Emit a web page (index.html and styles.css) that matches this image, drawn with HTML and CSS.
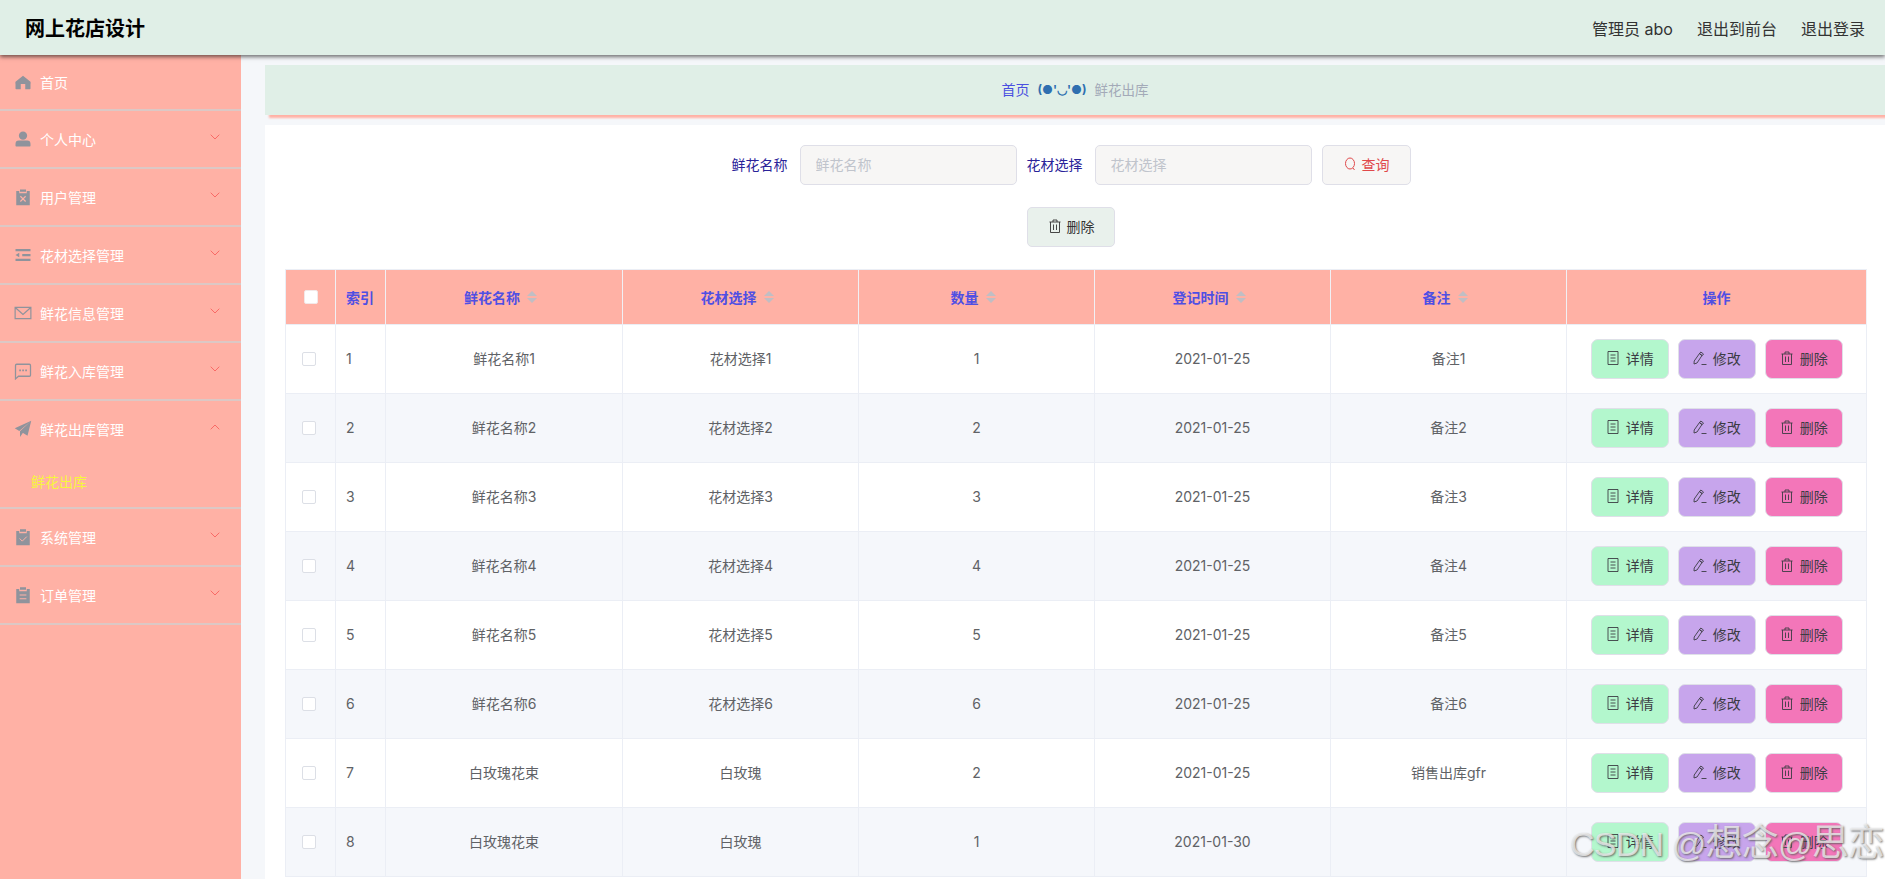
FILE: index.html
```html
<!DOCTYPE html>
<html lang="zh">
<head>
<meta charset="utf-8">
<title>网上花店设计</title>
<link rel="stylesheet" href="styles.css">
</head>
<body>
<svg class="defs" aria-hidden="true">
  <symbol id="i-home" viewBox="0 0 24 24"><path d="M12 3.500 2 11.500c-.3 1-.3 2 0 3v6a1 1 0 0 0 1 1h6v-7h6v7h6a1 1 0 0 0 1-1v-6c.3-1 .3-2 0-3z" fill="currentColor"/></symbol>
  <symbol id="i-user" viewBox="0 0 24 24"><circle cx="12" cy="7.500" r="5.500" fill="currentColor"/><path d="M2 21v-2.500a4.500 4.500 0 0 1 4.500-4.500h11a4.500 4.500 0 0 1 4.500 4.500V21a1 1 0 0 1-1 1H3a1 1 0 0 1-1-1z" fill="currentColor"/></symbol>
  <symbol id="i-release" viewBox="0 0 24 24"><path d="M8 2h8v3H8zM3 4h4v3h10V4h4v19H3z" fill="currentColor"/><path d="m8.500 11 7 7m0-7-7 7" stroke="#ffb1a5" stroke-width="1.500" fill="none"/></symbol>
  <symbol id="i-operation" viewBox="0 0 24 24"><path d="M2 4h20v3H2zM11 10.500h11v3H11zM2 17h20v3H2zM2 12l5-3v6z" fill="currentColor"/></symbol>
  <symbol id="i-message" viewBox="0 0 24 24"><path d="M1.500 4.500h21v15h-21zM2 5l10 9 10-9" fill="none" stroke="currentColor" stroke-width="1.600"/></symbol>
  <symbol id="i-chat" viewBox="0 0 24 24"><path d="M2 4.500a1.500 1.500 0 0 1 1.500-1.500h17a1.500 1.500 0 0 1 1.500 1.500v13a1.500 1.500 0 0 1-1.500 1.500H6l-4 3.500z" fill="none" stroke="currentColor" stroke-width="1.700"/><path d="M7 10h2.200v2.200H7zM11 10h2.200v2.200H11zM15 10h2.200v2.200H15z" fill="currentColor"/></symbol>
  <symbol id="i-send" viewBox="0 0 24 24"><path d="M23 1 1 11l6 3.500zM23 1 9.500 15.500 18 21zM23 1 8 15v7.500l3.500-5z" fill="currentColor"/></symbol>
  <symbol id="i-claim" viewBox="0 0 24 24"><path d="M8 1.500h8v3.500H8zM3 4h4v3h10V4h4v19H3z" fill="currentColor"/><path d="m7.500 14 3.500 3.500 6-6" stroke="#ffb1a5" stroke-width="1.300" fill="none"/></symbol>
  <symbol id="i-order" viewBox="0 0 24 24"><path d="M8 1.500h8v3.500H8zM3 4h4v3h10V4h4v19H3z" fill="currentColor"/><path d="M7.500 12h9M7.500 17h9" stroke="#ffb1a5" stroke-width="1.500" fill="none"/></symbol>
  <symbol id="i-down" viewBox="0 0 10 6"><path d="m.7.7 4.300 4.300L9.300.7" fill="none" stroke="currentColor" stroke-width="1"/></symbol>
  <symbol id="i-up" viewBox="0 0 10 6"><path d="M.7 5.300 5 1l4.300 4.300" fill="none" stroke="currentColor" stroke-width="1"/></symbol>
  <symbol id="i-search" viewBox="0 0 14 14"><ellipse cx="7" cy="6.500" rx="4.500" ry="5.500" fill="none" stroke="currentColor"/><path d="m10 11 1.500 2" fill="none" stroke="currentColor"/></symbol>
  <symbol id="i-trash" viewBox="0 0 14 14"><path d="M1.500 3h11M5 3V1h4v2M2.500 3v10.500h9V3M5.500 5.500v5.500M8.500 5.500v5.500" fill="none" stroke="currentColor" stroke-width=".9"/></symbol>
  <symbol id="i-doc" viewBox="0 0 14 14"><path d="M2 .5h10v13H2zM4.500 4h5M4.500 7h5M4.500 10h5" fill="none" stroke="currentColor" stroke-width=".9"/></symbol>
  <symbol id="i-edit" viewBox="0 0 14 14"><path d="M6.500 2.500l2.500 2-5 7.500-3 1 .2-3zM7.800 1l2.700 2-1.300 1.700-2.700-2zM8.500 13.500h5" fill="none" stroke="currentColor" stroke-width=".9"/></symbol>
</svg>

<header class="topbar">
  <div class="brand">网上花店设计</div>
  <nav class="topnav"><span>管理员 abo</span><span>退出到前台</span><span>退出登录</span></nav>
</header>

<div class="shell">
  <aside class="sidebar">
    <div class="menu-item"><svg class="mi"><use href="#i-home"/></svg><span>首页</span></div>
    <div class="menu-item"><svg class="mi"><use href="#i-user"/></svg><span>个人中心</span><svg class="arrow"><use href="#i-down"/></svg></div>
    <div class="menu-item"><svg class="mi"><use href="#i-release"/></svg><span>用户管理</span><svg class="arrow"><use href="#i-down"/></svg></div>
    <div class="menu-item"><svg class="mi"><use href="#i-operation"/></svg><span>花材选择管理</span><svg class="arrow"><use href="#i-down"/></svg></div>
    <div class="menu-item"><svg class="mi"><use href="#i-message"/></svg><span>鲜花信息管理</span><svg class="arrow"><use href="#i-down"/></svg></div>
    <div class="menu-item"><svg class="mi"><use href="#i-chat"/></svg><span>鲜花入库管理</span><svg class="arrow"><use href="#i-down"/></svg></div>
    <div class="menu-group">
      <div class="menu-title"><svg class="mi"><use href="#i-send"/></svg><span>鲜花出库管理</span><svg class="arrow"><use href="#i-up"/></svg></div>
      <div class="submenu-item">鲜花出库</div>
    </div>
    <div class="menu-item"><svg class="mi"><use href="#i-claim"/></svg><span>系统管理</span><svg class="arrow"><use href="#i-down"/></svg></div>
    <div class="menu-item"><svg class="mi"><use href="#i-order"/></svg><span>订单管理</span><svg class="arrow"><use href="#i-down"/></svg></div>
  </aside>

  <main class="content">
    <div class="crumb"><b>首页</b><i>(●'◡'●)</i><em>鲜花出库</em></div>
    <section class="panel">
      <form class="search">
        <label>鲜花名称</label>
        <input class="field" placeholder="鲜花名称">
        <label class="second">花材选择</label>
        <input class="field" placeholder="花材选择">
        <button type="button" class="btn-search"><svg class="bi"><use href="#i-search"/></svg>查询</button>
      </form>
      <div class="actions">
        <button type="button" class="btn-del"><svg class="bi"><use href="#i-trash"/></svg>删除</button>
      </div>
      <table class="grid">
        <colgroup><col class="c-s"><col class="c-s"><col class="c-a"><col class="c-b"><col class="c-b"><col class="c-b"><col class="c-b"><col class="c-o"></colgroup>
        <thead>
          <tr>
            <th><span class="cb head"></span></th>
            <th class="left">索引</th>
            <th><span class="th">鲜花名称<span class="sort"></span></span></th>
            <th><span class="th">花材选择<span class="sort"></span></span></th>
            <th><span class="th">数量<span class="sort"></span></span></th>
            <th><span class="th">登记时间<span class="sort"></span></span></th>
            <th><span class="th">备注<span class="sort"></span></span></th>
            <th>操作</th>
          </tr>
        </thead>
        <tbody>
          <tr><td><span class="cb"></span></td><td class="left">1</td><td>鲜花名称1</td><td>花材选择1</td><td>1</td><td>2021-01-25</td><td>备注1</td><td><div class="ops"><button type="button" class="op green"><svg class="bi"><use href="#i-doc"/></svg>详情</button><button type="button" class="op purple"><svg class="bi"><use href="#i-edit"/></svg>修改</button><button type="button" class="op pink"><svg class="bi"><use href="#i-trash"/></svg>删除</button></div></td></tr>
          <tr><td><span class="cb"></span></td><td class="left">2</td><td>鲜花名称2</td><td>花材选择2</td><td>2</td><td>2021-01-25</td><td>备注2</td><td><div class="ops"><button type="button" class="op green"><svg class="bi"><use href="#i-doc"/></svg>详情</button><button type="button" class="op purple"><svg class="bi"><use href="#i-edit"/></svg>修改</button><button type="button" class="op pink"><svg class="bi"><use href="#i-trash"/></svg>删除</button></div></td></tr>
          <tr><td><span class="cb"></span></td><td class="left">3</td><td>鲜花名称3</td><td>花材选择3</td><td>3</td><td>2021-01-25</td><td>备注3</td><td><div class="ops"><button type="button" class="op green"><svg class="bi"><use href="#i-doc"/></svg>详情</button><button type="button" class="op purple"><svg class="bi"><use href="#i-edit"/></svg>修改</button><button type="button" class="op pink"><svg class="bi"><use href="#i-trash"/></svg>删除</button></div></td></tr>
          <tr><td><span class="cb"></span></td><td class="left">4</td><td>鲜花名称4</td><td>花材选择4</td><td>4</td><td>2021-01-25</td><td>备注4</td><td><div class="ops"><button type="button" class="op green"><svg class="bi"><use href="#i-doc"/></svg>详情</button><button type="button" class="op purple"><svg class="bi"><use href="#i-edit"/></svg>修改</button><button type="button" class="op pink"><svg class="bi"><use href="#i-trash"/></svg>删除</button></div></td></tr>
          <tr><td><span class="cb"></span></td><td class="left">5</td><td>鲜花名称5</td><td>花材选择5</td><td>5</td><td>2021-01-25</td><td>备注5</td><td><div class="ops"><button type="button" class="op green"><svg class="bi"><use href="#i-doc"/></svg>详情</button><button type="button" class="op purple"><svg class="bi"><use href="#i-edit"/></svg>修改</button><button type="button" class="op pink"><svg class="bi"><use href="#i-trash"/></svg>删除</button></div></td></tr>
          <tr><td><span class="cb"></span></td><td class="left">6</td><td>鲜花名称6</td><td>花材选择6</td><td>6</td><td>2021-01-25</td><td>备注6</td><td><div class="ops"><button type="button" class="op green"><svg class="bi"><use href="#i-doc"/></svg>详情</button><button type="button" class="op purple"><svg class="bi"><use href="#i-edit"/></svg>修改</button><button type="button" class="op pink"><svg class="bi"><use href="#i-trash"/></svg>删除</button></div></td></tr>
          <tr><td><span class="cb"></span></td><td class="left">7</td><td>白玫瑰花束</td><td>白玫瑰</td><td>2</td><td>2021-01-25</td><td>销售出库gfr</td><td><div class="ops"><button type="button" class="op green"><svg class="bi"><use href="#i-doc"/></svg>详情</button><button type="button" class="op purple"><svg class="bi"><use href="#i-edit"/></svg>修改</button><button type="button" class="op pink"><svg class="bi"><use href="#i-trash"/></svg>删除</button></div></td></tr>
          <tr><td><span class="cb"></span></td><td class="left">8</td><td>白玫瑰花束</td><td>白玫瑰</td><td>1</td><td>2021-01-30</td><td></td><td><div class="ops"><button type="button" class="op green"><svg class="bi"><use href="#i-doc"/></svg>详情</button><button type="button" class="op purple"><svg class="bi"><use href="#i-edit"/></svg>修改</button><button type="button" class="op pink"><svg class="bi"><use href="#i-trash"/></svg>删除</button></div></td></tr>
        </tbody>
      </table>
    </section>
  </main>
</div>
<div class="watermark">CSDN @<span class="wm-cjk">想念</span>@<span class="wm-cjk">思恋</span></div>
</body>
</html>
```

FILE: styles.css
```css
* { box-sizing: border-box; }
html, body { margin: 0; height: 100%; overflow: hidden; }
body {
  font-family: Inter, "Noto Sans CJK SC", sans-serif;
  font-size: 14px;
  color: #606266;
  background: #f5f7fa;
}
.defs { display: none; }

.topbar {
  position: relative;
  z-index: 2;
  height: 55px;
  display: flex;
  align-items: center;
  justify-content: space-between;
  padding: 0 20px 0 25px;
  background: #e0efe7;
  box-shadow: 0 2px 4px rgba(0, 0, 0, .55);
}
.brand { font-size: 20px; font-weight: 700; color: #000; }
.topnav { display: flex; gap: 24px; font-size: 16px; color: #333; }

.shell { display: flex; height: 824px; }
.sidebar {
  flex: none;
  width: 241px;
  margin-top: -2px;
  height: 826px;
  background: #ffb1a5;
  color: #fff;
}
.menu-item, .menu-title {
  position: relative;
  display: flex;
  align-items: center;
  padding-left: 14px;
}
.menu-item { height: 58px; border-bottom: 2px solid #dcc8c5; }
.menu-item:first-child { padding-top: 2px; }
.menu-title { height: 56px; }
.menu-group { border-bottom: 2px solid #dcc8c5; }
.mi { flex: none; width: 18px; height: 18px; margin-right: 8px; color: #8f939c; }
.arrow {
  position: absolute;
  left: 210px;
  top: 23px;
  width: 10px;
  height: 6px;
  color: #f96a66;
}
.submenu-item { height: 50px; line-height: 50px; padding-left: 31px; color: #f6f63e; }

.content { flex: 1; min-width: 0; padding: 10px 0 0 24px; }
.crumb {
  height: 50px;
  display: flex;
  align-items: center;
  justify-content: center;
  gap: 8px;
  padding-bottom: 2px;
  background: #e0efe7;
  box-shadow: 4px 3px 2px #ffb1a5;
  font-size: 13.500px;
}
.crumb b { font-weight: 400; color: #4a4fe0; font-size: 14px; }
.crumb i { font-style: normal; font-weight: 700; font-size: 12px; color: #2f6fb0; }
.crumb em { font-style: normal; color: #a3aab8; }

.panel { margin-top: 10px; height: 760px; background: #fff; padding: 20px 18px 0 20px; }
.search { display: flex; align-items: center; justify-content: center; height: 40px; padding-right: 10px; }
.search label { color: #2a2399; margin-right: 12px; padding-bottom: 2px; }
.search .second { margin-left: 10px; }
.field {
  width: 217px;
  height: 40px;
  padding: 0 15px 2px;
  background: #f7f6f5;
  border: 1px solid #dfdfe8;
  border-radius: 5px;
  font: inherit;
  outline: none;
}
.field::placeholder { color: #c0c4cc; }
button {
  display: inline-flex;
  align-items: center;
  justify-content: center;
  gap: 5px;
  height: 40px;
  padding: 0 0 2px;
  border: 1px solid #dfdfe8;
  border-radius: 5px;
  font: inherit;
}
.bi { flex: none; width: 14px; height: 14px; }
.btn-search { width: 89px; margin-left: 10px; background: #f7f6f5; color: #e0484a; }
.actions { display: flex; justify-content: center; margin-top: 22px; padding-right: 10px; }
.btn-del { width: 88px; background: #e9f1ec; color: #333; }

.grid {
  margin-top: 22px;
  width: 1581px;
  table-layout: fixed;
  border-collapse: separate;
  border-spacing: 0;
  border-top: 1px solid #ebeef5;
  border-left: 1px solid #ebeef5;
}
.c-s { width: 50px; }
.c-a { width: 237px; }
.c-b { width: 236px; }
.c-o { width: 300px; }
.grid th {
  height: 55px;
  padding: 0;
  background: #ffb1a5;
  color: #4f4fe3;
  font-weight: 700;
  text-align: center;
  border-right: 1px solid #f1f0f5;
  border-bottom: 1px solid #ebeef5;
}
.grid td {
  height: 69px;
  padding: 0 0 2px;
  text-align: center;
  border-right: 1px solid #ebeef5;
  border-bottom: 1px solid #ebeef5;
}
.grid tbody tr:nth-child(even) td { background: #f5f7fb; }
.grid .left { text-align: left; padding-left: 10px; }
.th { display: inline-flex; align-items: center; gap: 7px; margin-right: 7px; }
.sort {
  position: relative;
  display: inline-block;
  width: 10px;
  height: 12px;
}
.sort::before, .sort::after {
  content: "";
  position: absolute;
  left: 0;
  border: 5px solid transparent;
}
.sort::before { top: -5px; border-bottom-color: #c0bec4; }
.sort::after { bottom: -5px; border-top-color: #c0bec4; }
.cb {
  display: block;
  width: 14px;
  height: 14px;
  margin: 2px 0 0 16px;
  background: #fff;
  border: 1px solid #dcdfe6;
  border-radius: 2px;
}
.cb.head { margin: 0 0 0 18px; border-color: #f3e8e8; }
.ops { display: flex; gap: 8.500px; padding: 2px 0 0 23.500px; }
.op { width: 78.500px; border-radius: 7px; color: #3c3c44; gap: 6px; border-color: #dfe0e8; }
.green { background: #b3f7cd; }
.purple { background: #c7a5ec; }
.pink { background: #f376b9; }

.watermark {
  position: absolute;
  left: 1570px;
  top: 822px;
  font-family: "Liberation Sans", "Noto Sans CJK SC", sans-serif;
  font-size: 34px;
  line-height: 44px;
  letter-spacing: -.8px;
  white-space: nowrap;
  color: rgba(238, 238, 238, .78);
  text-shadow: 1px 1px 2px rgba(95, 95, 95, .85);
  pointer-events: none;
}
.wm-cjk { font-size: 37px; }
```
